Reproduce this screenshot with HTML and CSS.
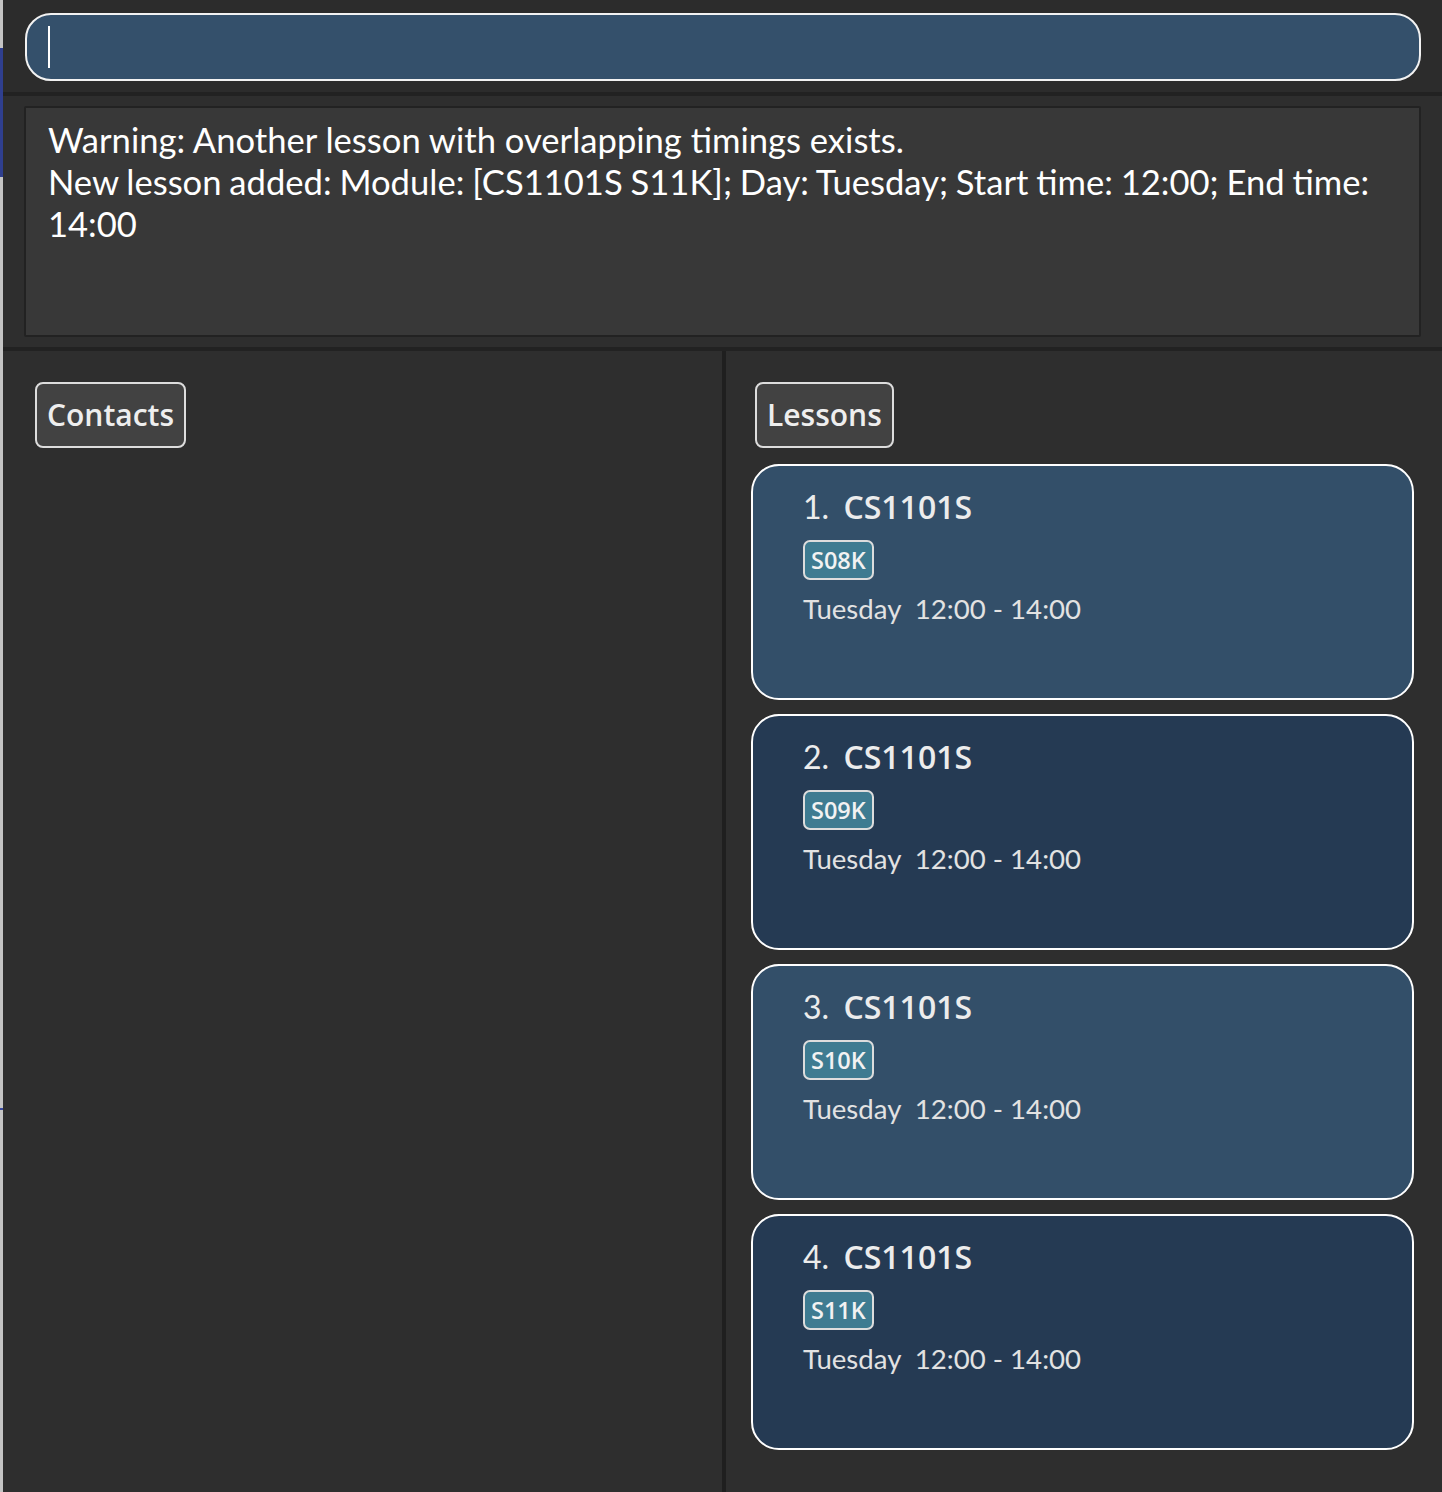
FILE: index.html
```html
<!DOCTYPE html>
<html lang="en">
<head>
    <meta charset="UTF-8">
    <meta name="viewport" content="width=device-width, initial-scale=1.0">
    <title>TutorsPet</title>
    <link rel="stylesheet" href="styles.css">
</head>
<body>
    <div class="window-edge">
        <span class="edge-blue"></span>
        <span class="edge-mark"></span>
    </div>
    <div class="app">
        <div class="command-pane">
            <div class="command-box">
                <span class="caret"></span>
            </div>
        </div>

        <div class="result-pane">
            <div class="result-box">
                Warning: Another lesson with overlapping timings exists.<br>
                <span class="result-line">New lesson added: Module: [CS1101S S11K]; Day: Tuesday; Start time: 12:00; End time: 14:00</span>
            </div>
        </div>

        <div class="main">
            <div class="panel">
                <div class="panel-title">Contacts</div>
            </div>
            <div class="divider"></div>
            <div class="panel">
                <div class="panel-title">Lessons</div>
                <div class="lesson-list">
                    <div class="lesson-card odd">
                        <div class="lesson-name"><span class="index">1.</span> CS1101S</div>
                        <div class="tags"><span class="tag">S08K</span></div>
                        <div class="lesson-time">Tuesday&nbsp; 12:00 - 14:00</div>
                    </div>
                    <div class="lesson-card even">
                        <div class="lesson-name"><span class="index">2.</span> CS1101S</div>
                        <div class="tags"><span class="tag">S09K</span></div>
                        <div class="lesson-time">Tuesday&nbsp; 12:00 - 14:00</div>
                    </div>
                    <div class="lesson-card odd">
                        <div class="lesson-name"><span class="index">3.</span> CS1101S</div>
                        <div class="tags"><span class="tag">S10K</span></div>
                        <div class="lesson-time">Tuesday&nbsp; 12:00 - 14:00</div>
                    </div>
                    <div class="lesson-card even">
                        <div class="lesson-name"><span class="index">4.</span> CS1101S</div>
                        <div class="tags"><span class="tag">S11K</span></div>
                        <div class="lesson-time">Tuesday&nbsp; 12:00 - 14:00</div>
                    </div>
                </div>
            </div>
        </div>
    </div>
</body>
</html>
```

FILE: styles.css
```css
body {
    margin: 0;
    padding: 0;
    height: 1492px;
    overflow: hidden;
    display: flex;
    background: #2e2e2e;
    font-family: 'Lato', 'Open Sans', sans-serif;
    color: white;
}

/* strip of the desktop left of the window */
.window-edge {
    width: 3px;
    flex-shrink: 0;
    background: #c4c4c4;
    padding-top: 48px;
}

.edge-blue {
    display: block;
    width: 3px;
    height: 129px;
    background: #2f3f8f;
}

.edge-mark {
    display: block;
    width: 3px;
    height: 2px;
    margin-top: 931px;
    background: #3a4aa0;
}

.app {
    flex: 1;
    display: flex;
    flex-direction: column;
    min-width: 0;
}

.command-pane {
    background: #2c2c2c;
    padding: 13px 21px 11px 22px;
    border-bottom: 4px solid #222;
}

.command-box {
    height: 64px;
    background: #34506b;
    border: 2px solid #f2f2f2;
    border-radius: 26px;
    display: flex;
    align-items: center;
    padding-left: 21px;
}

.caret {
    width: 2px;
    height: 42px;
    background: white;
}

.result-pane {
    background: #2e2e2e;
    padding: 10px 21px 10px 21px;
    border-bottom: 4px solid #222;
}

.result-box {
    height: 199px;
    background: #383838;
    border: 2px solid #222;
    border-radius: 2px;
    padding: 11px 22px 17px 22px;
    font-size: 34.6px;
    line-height: 42px;
    color: #fff;
}

.result-line {
    word-spacing: -1px;
}

.main {
    flex: 1;
    display: flex;
}

.panel {
    flex: 1;
    padding: 31px 28px 0 29px;
}

.panel:first-child {
    padding-left: 32px;
}

.divider {
    width: 4px;
    background: #1f1f1f;
}

.panel-title {
    display: inline-block;
    font-family: 'Open Sans', sans-serif;
    font-weight: 600;
    font-size: 30px;
    line-height: 62px;
    padding: 0 10px;
    color: #eeeeee;
    background: #424242;
    border: 2px solid #dddddd;
    border-radius: 8px;
}

.lesson-list {
    display: flex;
    flex-direction: column;
    gap: 14px;
    margin-top: 16px;
    margin-left: -4px;
}

.lesson-card {
    height: 232px;
    border: 2px solid #ffffff;
    border-radius: 28px;
    padding: 0 50px;
}

.lesson-card.odd {
    background: #334f69;
}

.lesson-card.even {
    background: #253a53;
}

.lesson-name {
    margin-top: 21px;
    font-family: 'Open Sans', sans-serif;
    font-weight: 600;
    font-size: 32px;
    line-height: 40px;
    color: #ececec;
}

.lesson-name .index {
    font-family: 'Lato', sans-serif;
    font-weight: 400;
    margin-right: 6px;
}

.tags {
    margin-top: 13px;
    display: flex;
}

.tag {
    font-family: 'Open Sans', sans-serif;
    font-weight: 600;
    font-size: 23.5px;
    line-height: 36px;
    padding: 0 6px;
    color: #f2f2f2;
    background: #3e7b91;
    border: 2px solid #dddddd;
    border-radius: 7px;
}

.lesson-time {
    margin-top: 11px;
    font-size: 27.6px;
    line-height: 36px;
    color: #e2e2e2;
}
```
